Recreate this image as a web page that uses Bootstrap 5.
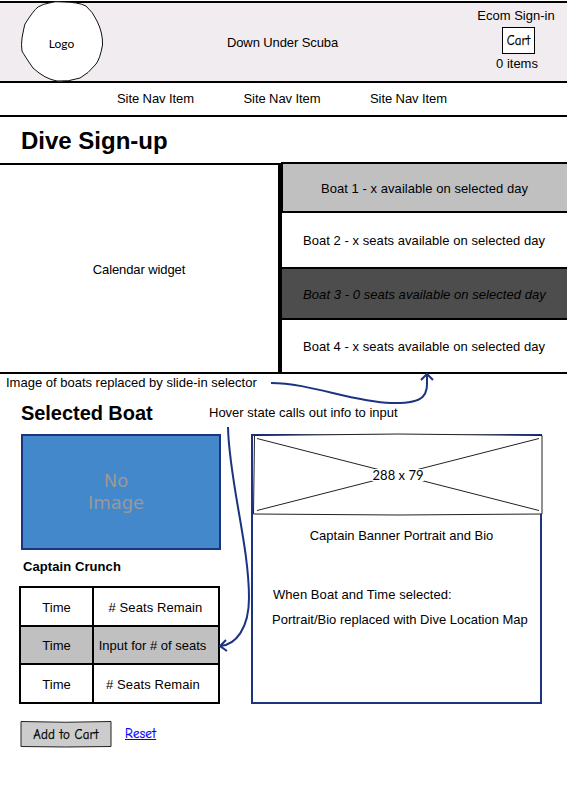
<!DOCTYPE html>
<html lang="en">
<head>
<meta charset="utf-8">
<meta name="viewport" content="width=device-width, initial-scale=1">
<title>Down Under Scuba</title>
<link href="https://cdn.jsdelivr.net/npm/bootstrap@5.3.0/dist/css/bootstrap.min.css" rel="stylesheet">
<style>
body{font-family:"Liberation Sans",Arial,sans-serif;font-size:13px;line-height:16px;color:#000;background:#fff;width:567px;height:805px;overflow:hidden}
.sketch{font-family:"Comic Sans MS","Comic Neue",Lato,sans-serif;-webkit-text-stroke:.25px currentColor}
.site-head{margin-top:1px;height:82px;background:#f1ecf0;border-top:2px solid #000;border-bottom:2px solid #000}
.logo-disc{width:84px;height:82px;margin:-2px 0 0 20px}
.brand-name{letter-spacing:-.1px;padding:2px 6px 0 0}
.ecom{width:100px;padding:5px 2px 0 0}
.cart-box{width:33px;height:27px;border:1px solid #000;background:#fff;color:#000;margin:3px 0 2px 5px}
.ecom span{padding-left:2px}
.site-nav{height:34px;border-bottom:2px solid #000;padding-left:117px;gap:49.5px;letter-spacing:-.08px}
.page-title{font-size:24px;line-height:28px;font-weight:700;margin:10px 0 7px 21px}
.picker{height:212px}
.calendar{width:282px;margin-top:1px;padding-top:2px;border-top:2px solid #000;border-bottom:2px solid #000;border-right:4px solid #000;letter-spacing:-.1px}
.boats{border-top:2px solid #000;margin-left:-1px;letter-spacing:.05px}
.boats .list-group-item{border:0;border-left:1px solid #000;border-bottom:2px solid #000;border-radius:0;padding:2px 1px 0 0;color:#000;background:#fff}
.boats .boat1{height:49px;background:#c0c0c0;border-left-width:2px}
.boats .boat2{height:56px}
.boats .boat3{height:51px;background:#4d4d4d;padding-right:0}
.boats .boat4{height:54px}
.note-slide{margin:1px 0 0 6px}
.sub-title{font-size:20px;line-height:24px;font-weight:700;margin:0 0 0 21px;width:188px;letter-spacing:-.05px}
.sub-row{margin-top:10px;height:33px}
.left-col{width:200px;margin-left:21px}
.no-image{width:200px;height:116px;background:#4488cc;border:2px solid #1c3380;color:#999;font-family:"DejaVu Sans",sans-serif;font-size:18px;line-height:22px;padding:0 10px 0 0;letter-spacing:-.1px}
.captain{margin:9px 0 11px 2px;font-weight:700;letter-spacing:.08px}
.seats{width:201px;margin-left:-2px;border-collapse:collapse;table-layout:fixed}
.seats td{border:2px solid #000;padding:2px 0 0;text-align:center;vertical-align:middle;white-space:nowrap;height:39px}
.seats td:last-child{padding-right:6px;letter-spacing:.1px}
.seats tr:first-child td:last-child{padding-right:1px}
.seats tr:nth-child(2) td{height:38px}
.seats tr:nth-child(2) td:last-child{padding-right:7px;letter-spacing:0}
.seats .hot td{background:#c0c0c0}
.bio{width:291px;height:270px;margin-left:30px;border:2px solid #1c3380}
.banner{width:292px;height:84px;margin:-4px 0 0 3px;display:block;flex:none}
.bio-name{margin:12px 0 0 10px}
.bio-notes{margin-top:43px;padding-left:19px}
.bio-notes p:first-child{margin:0 0 9px 1px;letter-spacing:.06px}
.actions{margin:16px 0 0 20px;gap:13px}
.add-btn{width:92px;height:28px}
.add-btn svg{position:absolute;left:0;top:0}
.add-btn span{position:relative;padding-top:1px;letter-spacing:.15px}
.reset-link{color:#00f;letter-spacing:.3px}
.arrows{position:absolute;left:0;top:0;pointer-events:none}
</style>
<script src="https://cdn.jsdelivr.net/npm/bootstrap@5.3.0/dist/js/bootstrap.bundle.min.js"></script>
</head>
<body class="position-relative">
<header class="site-head d-flex">
  <svg class="logo-disc flex-shrink-0" viewBox="0 0 84 82"><path d="M29 2Q35 0 43 1Q58 1 66 5Q73 11 77 20Q83 32 82.500 44Q80 58 76 63Q68 73 60 77Q48 81 37 80Q25 78 13 67Q4 54 2 50Q1 44 2 37Q4 26 5 23Q13 10 18 6Q23 3 29 2Z" fill="#fff" stroke="#111" stroke-width="1"/><text x="41.500" y="47" font-size="12" text-anchor="middle" font-family="Lato, sans-serif">Logo</text></svg>
  <div class="brand-name flex-grow-1 d-flex justify-content-center align-items-center">Down Under Scuba</div>
  <div class="ecom d-flex flex-column align-items-center text-nowrap"><a class="text-reset text-decoration-none">Ecom Sign-in</a>
    <div class="cart-box sketch d-flex align-items-center justify-content-center">Cart</div><span>0 items</span></div>
</header>
<nav class="site-nav d-flex align-items-center"><span>Site Nav Item</span><span>Site Nav Item</span><span>Site Nav Item</span></nav>
<h1 class="page-title">Dive Sign-up</h1>
<section class="picker d-flex">
  <div class="calendar d-flex flex-shrink-0 align-items-center justify-content-center">Calendar widget</div>
  <div class="boats list-group rounded-0 flex-grow-1">
    <div class="list-group-item boat1 d-flex align-items-center justify-content-center">Boat 1 - x available on selected day</div>
    <div class="list-group-item boat2 d-flex align-items-center justify-content-center">Boat 2 - x seats available on selected day</div>
    <div class="list-group-item boat3 d-flex align-items-center justify-content-center fst-italic">Boat 3 - 0 seats available on selected day</div>
    <div class="list-group-item boat4 d-flex align-items-center justify-content-center">Boat 4 - x seats available on selected day</div>
  </div>
</section>
<div class="note-slide">Image of boats replaced by slide-in selector</div>
<div class="sub-row d-flex"><h2 class="sub-title">Selected Boat</h2><div class="pt-1">Hover state calls out info to input</div></div>
<main class="d-flex">
  <div class="left-col">
    <div class="no-image d-flex align-items-center justify-content-center text-center">No<br>Image</div>
    <div class="captain">Captain Crunch</div>
    <table class="seats">
      <colgroup><col width="73"><col></colgroup>
      <tr><td>Time</td><td># Seats Remain</td></tr>
      <tr class="hot"><td>Time</td><td>Input for # of seats</td></tr>
      <tr><td>Time</td><td># Seats Remain</td></tr>
    </table>
  </div>
  <section class="bio d-flex flex-column align-items-center">
    <svg class="banner" viewBox="252 432 292 84"><path d="M254.500 435.500Q398 432.500 542 435.500V514Q398 516 253.500 514Z" fill="#fff" stroke="#222" stroke-width="1"/><path d="M257 438.500L539 510.500M257 510.500L539 438.500" stroke="#222" stroke-width="1"/><rect x="372" y="469" width="52" height="12" fill="#fff"/><text x="398" y="480" text-anchor="middle" font-size="13" font-family="Lato, sans-serif" textLength="51">288 x 79</text></svg>
    <div class="bio-name">Captain Banner Portrait and Bio</div>
    <div class="bio-notes w-100 text-nowrap">
      <p>When Boat and Time selected:</p>
      <p class="m-0">Portrait/Bio replaced with Dive Location Map</p>
    </div>
  </section>
</main>
<div class="actions d-flex align-items-center sketch">
  <div class="add-btn position-relative d-flex align-items-center justify-content-center" role="button"><svg width="92" height="28"><path d="M1 1.500Q45 3 91 1.500V26.500Q45 27.500 1 26.500Z" fill="#ccc" stroke="#222"/></svg><span>Add to Cart</span></div>
  <a class="reset-link" href="#">Reset</a>
</div>
<svg class="arrows" width="567" height="805" fill="none" stroke="#1c3380" stroke-width="2"><path d="M271 383C310 383 352 402 391 403S427 392 427 375M421 380L427 374L433 380"/><path d="M228 427C229 480 249 545 249 598C249 628 236 645 220 646M226 640L220 646L227 651"/></svg>
</body>
</html>
